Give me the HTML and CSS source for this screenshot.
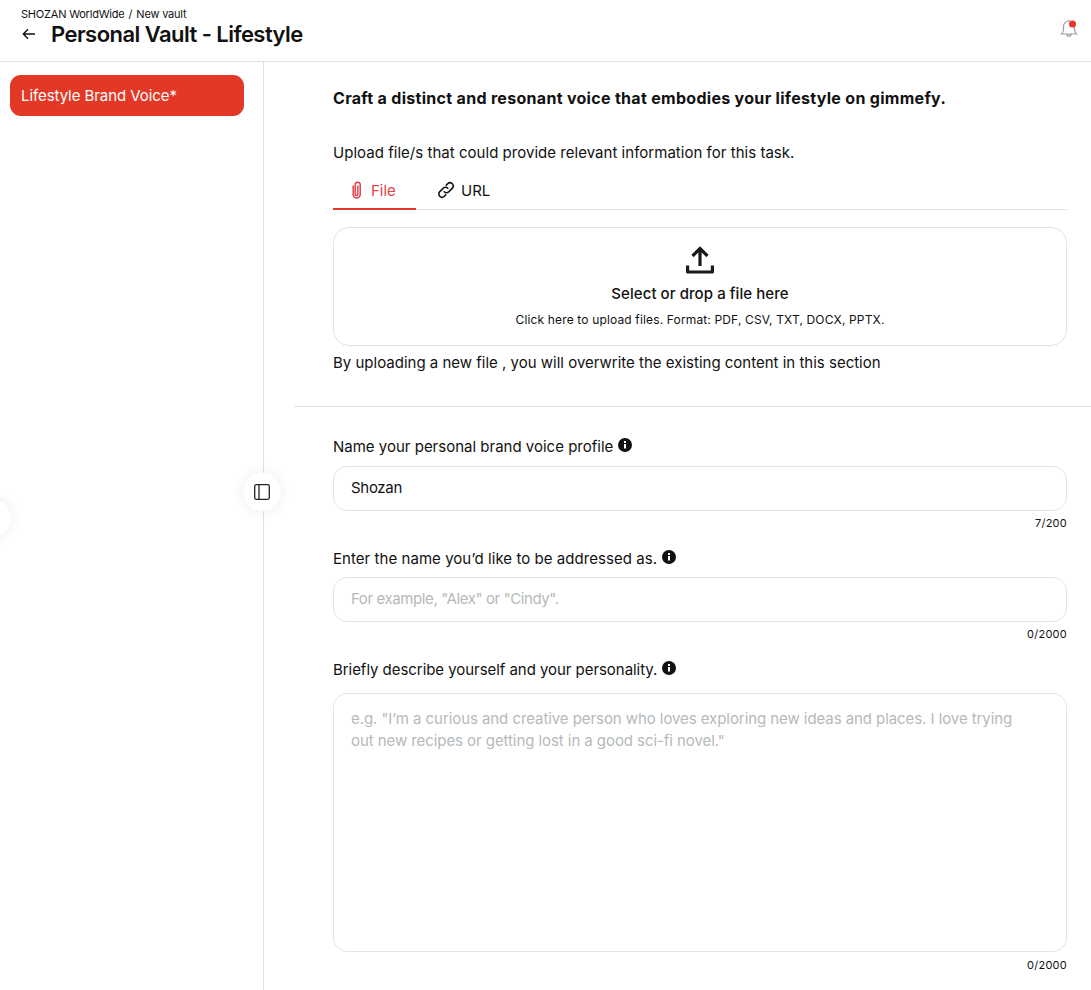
FILE: index.html
```html
<!DOCTYPE html>
<html lang="en">
<head>
<meta charset="utf-8">
<title>Personal Vault - Lifestyle</title>
<link rel="stylesheet" href="styles.css">
</head>
<body>
<header class="topbar">
  <div class="titles">
    <div class="crumbs"><span>SHOZAN WorldWide</span><span class="sep">/</span><span>New vault</span></div>
    <div class="title-row">
      <svg class="back" width="16" height="16" viewBox="0 0 16 16" fill="none" stroke="#111" stroke-width="1.4"><path d="M14 8H2.5M7 3.3 2.3 8 7 12.7"/></svg>
      <h1>Personal Vault - Lifestyle</h1>
    </div>
  </div>
  <svg class="bell" width="20" height="20" viewBox="0 0 20 20" fill="none"><path d="M2.5 16c1.400-1.200 2-2.600 2-5V8.500a5.500 5.500 0 0 1 11 0V11c0 2.400.6 3.800 2 5ZM8 16.200a2 2 0 0 0 4 0M10 3V1.800" stroke="#9c9c9c" stroke-width="1.200"/><circle cx="13.500" cy="6" r="3.500" fill="#e33826"/></svg>
</header>
<div class="shell">
  <aside class="sidebar">
    <div class="nav-item">Lifestyle Brand Voice*</div>
  </aside>
  <main class="main">
    <section class="upload">
      <h2>Craft a distinct and resonant voice that embodies your lifestyle on gimmefy.</h2>
      <p class="intro">Upload file/s that could provide relevant information for this task.</p>
      <div class="tabs">
        <div class="tab active">
          <svg width="18" height="18" viewBox="0 0 18 18" fill="none" stroke="#e8404a" stroke-width="1.500"><path d="M5.500 4.500v9a3.500 3.500 0 0 0 7 0V3.800a2.500 2.500 0 0 0-5 0v9.400a1 1 0 0 0 2.600 0V4.500" transform="translate(-0.300 0)"/></svg>
          <span>File</span>
        </div>
        <div class="tab">
          <svg width="18" height="18" viewBox="0 0 18 18" fill="none" stroke="#111" stroke-width="1.600" stroke-linecap="round"><path d="M7.200 10.800a3.200 3.200 0 0 0 4.600 0l3.400-3.400a3.250 3.250 0 0 0-4.600-4.600L9.300 4.100"/><path d="M10.800 7.200a3.200 3.200 0 0 0-4.600 0l-3.400 3.400a3.250 3.250 0 0 0 4.600 4.600l1.300-1.300"/></svg>
          <span>URL</span>
        </div>
      </div>
      <div class="drop">
        <svg width="28" height="28" viewBox="0 0 28 28" fill="none" stroke="#1a1a1a" stroke-width="3.200"><path d="M14 20V3M6.500 10 14 2.500 21.500 10"/><path d="M1.600 19.500v6.500h24.800v-6.500" stroke-linejoin="round"/></svg>
        <div class="drop-title">Select or drop a file here</div>
        <div class="drop-sub">Click here to upload files. Format: PDF, CSV, TXT, DOCX, PPTX.</div>
      </div>
      <p class="note">By uploading a new file , you will overwrite the existing content in this section</p>
    </section>
    <form class="fields">
      <div class="label-row"><label>Name your personal brand voice profile</label><svg class="info" viewBox="0 0 14 14"><circle cx="7" cy="7" r="7" fill="#111"/><rect x="6" y="6" width="2" height="4.500" fill="#fff"/><rect x="6" y="3" width="2" height="2" fill="#fff"/></svg></div>
      <div class="box filled">Shozan</div>
      <div class="count">7/200</div>
      <div class="label-row loose"><label>Enter the name you’d like to be addressed as.</label><svg class="info" viewBox="0 0 14 14"><circle cx="7" cy="7" r="7" fill="#111"/><rect x="6" y="6" width="2" height="4.500" fill="#fff"/><rect x="6" y="3" width="2" height="2" fill="#fff"/></svg></div>
      <div class="box ph short">For example, "Alex" or "Cindy".</div>
      <div class="count">0/2000</div>
      <div class="label-row tight"><label>Briefly describe yourself and your personality.</label><svg class="info" viewBox="0 0 14 14"><circle cx="7" cy="7" r="7" fill="#111"/><rect x="6" y="6" width="2" height="4.500" fill="#fff"/><rect x="6" y="3" width="2" height="2" fill="#fff"/></svg></div>
      <div class="area ph">e.g. "I’m a curious and creative person who loves exploring new ideas and places. I love trying out new recipes or getting lost in a good sci-fi novel."</div>
      <div class="count last">0/2000</div>
    </form>
  </main>
</div>
<button class="toggle" type="button" aria-label="Toggle sidebar"><svg width="18" height="18" viewBox="0 0 18 18" fill="none" stroke="#222" stroke-width="1.300"><rect x="1.700" y="1.700" width="14.600" height="14.600" rx="1.500"/><path d="M6 1.700v14.600"/></svg></button>
<div class="edge-circle"></div>
</body>
</html>
```
FILE: styles.css
```css
* { box-sizing: border-box; }
html, body { margin: 0; height: 990px; overflow: hidden; }
body {
  position: relative;
  background: #fff;
  color: #111;
  font-family: "Inter", "Liberation Sans", sans-serif;
  font-size: 15px;
  letter-spacing: 0;
}
.topbar {
  height: 62px;
  border-bottom: 1px solid #e3e3e3;
  padding: 8px 12px 0 21px;
  display: flex;
  justify-content: space-between;
}
.crumbs { font-size: 11px; line-height: 13px; display: flex; gap: 4px; letter-spacing: -0.2px; }
.title-row { display: flex; align-items: center; gap: 14px; }
.back { flex: none; }
h1 { margin: 0; font-size: 22px; line-height: 26px; font-weight: 600; letter-spacing: -0.55px; }
.bell { margin-top: 10px; }
.shell { display: flex; height: 928px; }
.sidebar {
  width: 264px;
  flex: none;
  border-right: 1px solid #e3e3e3;
  padding: 13px 19px 0 10px;
}
.nav-item {
  height: 41px;
  background: #e33826;
  color: #fff;
  border-radius: 11px;
  padding: 0 11px 1px;
  display: flex;
  align-items: center;
  letter-spacing: -0.07px;
}
.main { flex: 1; padding: 0 0 0 30px; min-width: 0; }
.upload {
  padding: 26px 24px 0 39px;
  height: 345px;
  border-bottom: 1px solid #e3e3e3;
}
h2 { margin: 0; font-size: 16px; line-height: 21px; font-weight: 700; letter-spacing: 0.3px; }
.intro { margin: 34px 0 0; line-height: 20px; letter-spacing: 0.03px; }
.tabs { display: flex; margin-top: 10px; border-bottom: 1px solid #e3e3e3; height: 37px; }
.tab { display: flex; align-items: center; height: 37px; }
.tab.active { width: 83px; gap: 5px; color: #e8404a; border-bottom: 2px solid #e33826; padding: 0 0 1px 15px; }
.tab:not(.active) { padding: 0 0 3px 21px; gap: 6px; }
.drop {
  margin-top: 17px;
  height: 119px;
  border: 1px solid #e3e3e3;
  border-radius: 16px;
  display: flex;
  flex-direction: column;
  align-items: center;
  padding-top: 18px;
}
.drop-title { margin-top: 10px; line-height: 20px; font-weight: 500; letter-spacing: 0.07px; }
.drop-sub { margin-top: 8px; font-size: 12px; line-height: 16px; letter-spacing: 0.15px; }
.note { margin: 7px 0 0; line-height: 20px; }
.fields { padding: 29px 24px 0 39px; }
.label-row { display: flex; align-items: center; gap: 5px; height: 20px; }
.label-row.loose { letter-spacing: 0.05px; }
.label-row.tight { letter-spacing: -0.05px; }
.label-row + .box { margin-top: 9px; }
.label-row + .box.filled { margin-top: 10px; }
.info { width: 14px; height: 14px; flex: none; margin-top: -2px; }
.box, .area { border: 1px solid #e3e3e3; border-radius: 14px; padding: 0 17px; }
.box { height: 45px; display: flex; align-items: center; letter-spacing: -0.3px; padding-bottom: 2px; }
.box.short { letter-spacing: -0.4px; }
.area { height: 259px; margin-top: 14px; padding: 14px 40px 13px 17px; line-height: 22px; letter-spacing: -0.07px; }
.ph { color: #b5b9bb; }
.count { font-size: 11px; line-height: 14px; text-align: right; margin-top: 5px; margin-bottom: 18px; letter-spacing: 0.25px; }
.count.last { margin-top: 6px; margin-bottom: 0; }
.toggle {
  position: absolute;
  left: 243px;
  top: 473px;
  width: 38px;
  height: 38px;
  border: 0;
  border-radius: 50%;
  background: #fff;
  box-shadow: 0 0 14px rgba(0,0,0,.08);
  display: flex;
  align-items: center;
  justify-content: center;
  padding: 0;
}
.edge-circle {
  position: absolute;
  left: -27px;
  top: 499px;
  width: 38px;
  height: 38px;
  border-radius: 50%;
  background: #fff;
  box-shadow: 0 0 14px rgba(0,0,0,.08);
}
```
